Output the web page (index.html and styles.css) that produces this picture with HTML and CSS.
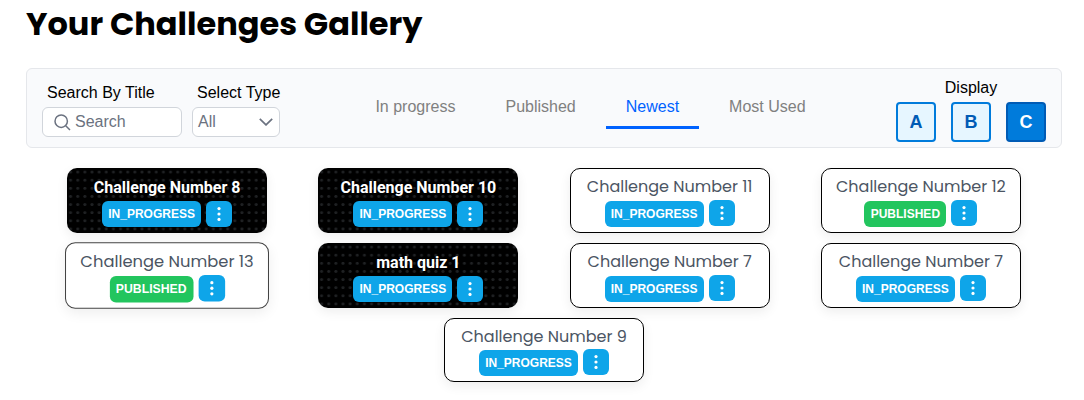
FILE: index.html
```html
<!DOCTYPE html>
<html lang="en">
<head>
<meta charset="utf-8">
<title>Your Challenges Gallery</title>
<link rel="stylesheet" href="styles.css">
</head>
<body>
<svg class="defs" width="0" height="0"><symbol id="dots" viewBox="0 0 4 16"><circle cx="2" cy="2.6" r="1.6"/><circle cx="2" cy="8" r="1.6"/><circle cx="2" cy="13.4" r="1.6"/></symbol></svg>
<h1 class="heading">Your Challenges Gallery</h1>
<section class="toolbar">
  <div class="filters">
    <label class="field search"><span class="label">Search By Title</span>
      <span class="control"><svg class="glass" viewBox="0 0 17 17"><circle cx="7.2" cy="7.2" r="6.2"/><path d="M11.7 11.7 16 16"/></svg><span>Search</span></span></label>
    <label class="field type"><span class="label">Select Type</span>
      <span class="control"><span>All</span><svg class="chevron" viewBox="0 0 14 8"><path d="M.8.9 7 6.9 13.2.9"/></svg></span></label>
  </div>
  <nav class="tabs"><a class="tab">In progress</a><a class="tab">Published</a><a class="tab active">Newest</a><a class="tab">Most Used</a></nav>
  <div class="display"><span class="display-label">Display</span>
    <div class="modes"><button class="mode">A</button><button class="mode">B</button><button class="mode selected">C</button></div></div>
</section>
<main class="gallery">
  <article class="card dark"><h2 class="title">Challenge Number 8</h2><div class="actions"><span class="status">IN_PROGRESS</span><span class="menu"><svg><use href="#dots"/></svg></span></div></article>
  <article class="card dark"><h2 class="title">Challenge Number 10</h2><div class="actions"><span class="status">IN_PROGRESS</span><span class="menu"><svg><use href="#dots"/></svg></span></div></article>
  <article class="card"><h2 class="title">Challenge Number 11</h2><div class="actions"><span class="status">IN_PROGRESS</span><span class="menu"><svg><use href="#dots"/></svg></span></div></article>
  <article class="card"><h2 class="title">Challenge Number 12</h2><div class="actions"><span class="status published">PUBLISHED</span><span class="menu"><svg><use href="#dots"/></svg></span></div></article>
  <article class="card hovered"><h2 class="title">Challenge Number 13</h2><div class="actions"><span class="status published">PUBLISHED</span><span class="menu"><svg><use href="#dots"/></svg></span></div></article>
  <article class="card dark"><h2 class="title">math quiz 1</h2><div class="actions"><span class="status">IN_PROGRESS</span><span class="menu"><svg><use href="#dots"/></svg></span></div></article>
  <article class="card"><h2 class="title">Challenge Number 7</h2><div class="actions"><span class="status">IN_PROGRESS</span><span class="menu"><svg><use href="#dots"/></svg></span></div></article>
  <article class="card"><h2 class="title">Challenge Number 7</h2><div class="actions"><span class="status">IN_PROGRESS</span><span class="menu"><svg><use href="#dots"/></svg></span></div></article>
  <article class="card last"><h2 class="title">Challenge Number 9</h2><div class="actions"><span class="status">IN_PROGRESS</span><span class="menu"><svg><use href="#dots"/></svg></span></div></article>
</main>
</body>
</html>
```
FILE: styles.css
```css
* { box-sizing: border-box; }
body { margin: 0; padding: 0 22px 0 26px; height: 400px; overflow: hidden; background: #fff; color: #000; font: 16px/20px "Liberation Sans", Arial, sans-serif; }
.defs { display: block; height: 0; }
.heading { margin: 0; height: 68px; font: 700 32px/48px Poppins, Inter, sans-serif; white-space: nowrap; }
.toolbar { display: flex; justify-content: space-between; height: 80px; padding: 0 15px; border: 1px solid #e5e7eb; border-radius: 6px; background: #f9fafc; }
.filters { display: flex; gap: 10px; padding-top: 14px; }
.field { display: flex; flex-direction: column; gap: 4px; }
.search { width: 140px; }
.type { width: 88px; }
.label { padding-left: 5px; white-space: nowrap; }
.control { display: flex; align-items: center; height: 30px; border: 1px solid #d1d5db; border-radius: 6px; background: #fff; color: #6b7280; }
.search .control { padding-left: 11px; gap: 4px; }
.type .control { justify-content: space-between; padding: 0 6px 0 5px; }
.glass { width: 17px; height: 17px; fill: none; stroke: #6b7280; stroke-width: 1.5; }
.chevron { width: 14px; height: 8px; fill: none; stroke: #6b7280; stroke-width: 1.7; }
.tabs { display: flex; gap: 10px; padding-top: 17px; margin-left: 5px; }
.tab { height: 43px; padding: 11px 20px 0; border-bottom: 3px solid transparent; color: #808080; white-space: nowrap; }
.tab.active { border-color: #0062ff; color: #0062ff; }
.display { display: flex; flex-direction: column; align-items: center; padding-top: 9px; gap: 4px; }
.display-label { line-height: 20px; }
.modes { display: flex; gap: 15px; }
.mode { width: 40px; height: 40px; padding: 0; border: 2px solid #007bdb; border-radius: 4px; background: #e6f6ff; color: #005bb5; font: 700 18px/20px "Liberation Sans", Arial, sans-serif; }
.mode.selected { border-color: #005bb5; background: #007bdb; color: #fff; }
.gallery { display: flex; flex-wrap: wrap; justify-content: space-around; align-content: flex-start; gap: 10px 5px; padding: 20px 18px 0; }
.card { width: 200px; height: 65px; padding-top: 8px; border: 1px solid #000; border-radius: 10px; background: #fff; box-shadow: 0 4px 12px rgba(0,0,0,.07); }
.title { margin: 0; height: 20px; color: #4b5563; font: 400 16px/20px Poppins, Inter, sans-serif; text-align: center; white-space: nowrap; }
.dark { border: 0; padding-top: 9px; background: #000 radial-gradient(circle, #1f2123 1.2px, transparent 1.8px) 0 0 / 7.143px 8.125px; }
.dark .title { color: #fff; font: 700 16px/21px Roboto, sans-serif; }
.actions { display: flex; justify-content: center; gap: 5px; padding-top: 4px; }
.status { width: 99px; height: 26px; border-radius: 6px; background: #0ea5e9; color: #fff; font: 700 12px/26px "Liberation Sans", Arial, sans-serif; text-align: center; }
.published { width: 82px; background: #22c55e; }
.menu { display: flex; align-items: center; justify-content: center; width: 26px; height: 26px; margin-top: -1px; border-radius: 6px; background: #0ea5e9; }
.dark .menu { margin-top: 0; }
.menu svg { width: 4px; height: 16px; fill: #fff; }
.hovered { transform: scale(1.02); border-color: #444; }
.last { height: 64px; }
.last .actions { padding-top: 3px; }
```
